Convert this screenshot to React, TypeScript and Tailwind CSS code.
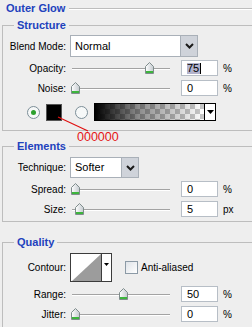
import React from "react";

function Thumb() {
  return (
    <svg width="9" height="12" viewBox="0 0 9 12">
      <defs>
        <linearGradient id="thumbg" x1="0" y1="0" x2="1" y2="0">
          <stop offset="0" stopColor="#ffffff" />
          <stop offset="1" stopColor="#c4cacf" />
        </linearGradient>
      </defs>
      <path d="M0.5 4.5 L4.5 0.5 L8.5 4.5 L8.5 11.5 L0.5 11.5 Z" fill="url(#thumbg)" stroke="#7f8c8c" />
      <path d="M1 9.5 H8 M1 10.5 H8" stroke="#3db53d" />
    </svg>
  );
}

function Slider({ pos }: { pos: number }) {
  return (
    <div className="relative w-[100px] h-[19px]">
      <div className="absolute left-[2px] right-0 top-[9px] h-px bg-[#a3a3a3]" />
      <div className="absolute left-[2px] right-0 top-[10px] h-px bg-white" />
      <div className="absolute top-[3px] flex" style={{ left: pos }}>
        <Thumb />
      </div>
    </div>
  );
}

function NumBox({ children }: { children: React.ReactNode }) {
  return (
    <div className="w-[37px] h-[16px] border border-[#b7bec6] bg-white pl-[5px] flex items-center text-[11px] leading-none text-black">
      {children}
    </div>
  );
}

function Chevron() {
  return (
    <svg width="9" height="6" viewBox="0 0 9 6">
      <path d="M1 1 L4.5 4.5 L8 1" fill="none" stroke="#1a1a1a" strokeWidth="2" />
    </svg>
  );
}

function SelectBox({ text, wide }: { text: string; wide: boolean }) {
  return (
    <div
      className={
        (wide ? "w-[128px] h-[22px] " : "w-[69px] h-[21px] ") +
        "flex border border-[#a9b0b8] bg-white"
      }
    >
      <div className="flex-1 flex items-center pl-[4px] text-[11px]">{text}</div>
      <div className="w-[17px] flex items-center justify-center bg-[#cfd3da] border-l border-[#a9b0b8]">
        <Chevron />
      </div>
    </div>
  );
}

function Label({ children }: { children: React.ReactNode }) {
  return <span className="w-[63px] text-right shrink-0">{children}</span>;
}

function SliderRow({
  label,
  pos,
  value,
  unit,
  selected,
}: {
  label: string;
  pos: number;
  value: string;
  unit: string;
  selected?: boolean;
}) {
  return (
    <div className="flex items-center h-[20px]">
      <Label>{label}</Label>
      <div className="ml-[4px]">
        <Slider pos={pos} />
      </div>
      <div className="ml-[11px]">
        <NumBox>
          {selected ? (
            <span className="bg-[#b3b3cc] pr-[1px] border-r border-black">{value}</span>
          ) : (
            value
          )}
        </NumBox>
      </div>
      <span className="ml-[5px]">{unit}</span>
    </div>
  );
}

function Radio({ on }: { on: boolean }) {
  return (
    <div className="w-[13px] h-[13px] rounded-full border border-[#7c8e98] bg-[#f6f8f8] flex items-center justify-center">
      {on && <div className="w-[5px] h-[5px] rounded-full bg-[#2da02d]" />}
    </div>
  );
}

function Legend({ children }: { children: React.ReactNode }) {
  return (
    <legend className="ml-[11px] px-[3px] font-bold text-[11px] leading-[14px] text-[#2141bd]">
      {children}
    </legend>
  );
}

export default function App() {
  return (
    <div className="relative w-[252px] h-[327px] overflow-hidden bg-[#eeeeee] font-['Liberation_Sans',Arial,sans-serif] text-[10px] text-black">
      <div className="flex items-center h-[17px] pl-[6px]">
        <span className="font-bold text-[11px] text-[#2141bd]">Outer Glow</span>
        <div className="flex-1 ml-[4px] h-[2px] border-t border-[#bdbdbd] border-b border-b-white" />
      </div>

      <fieldset className="mt-[1px] ml-[2px] w-[262px] border border-[#bdbdbd] pb-[9px]">
        <Legend>Structure</Legend>
        <div className="flex items-center mt-[3px] h-[22px]">
          <Label>Blend Mode:</Label>
          <div className="ml-[4px]">
            <SelectBox text="Normal" wide={true} />
          </div>
        </div>
        <div className="mt-[1px]">
          <SliderRow label="Opacity:" pos={75} value="75" unit="%" selected />
          <SliderRow label="Noise:" pos={1} value="0" unit="%" />
        </div>
        <div className="flex items-center mt-[5px] h-[18px]">
          <div className="ml-[24px]">
            <Radio on={true} />
          </div>
          <div className="ml-[6px] w-[16px] h-[17px] bg-black border border-[#555]" />
          <div className="ml-[13px]">
            <Radio on={false} />
          </div>
          <div className="ml-[6px] w-[122px] h-[18px] border border-black flex">
            <div className="flex-1 bg-[repeating-conic-gradient(#c8c8c8_0%_25%,#ffffff_0%_50%)] bg-[length:10px_10px]">
              <div className="w-full h-full bg-[linear-gradient(to_right,#000000,rgba(0,0,0,0.45)_40%,rgba(0,0,0,0))]" />
            </div>
            <div className="w-[11px] border-l border-black bg-white flex items-center justify-center">
              <svg width="7" height="4" viewBox="0 0 7 4">
                <path d="M0 0 H7 L3.5 4 Z" fill="#000" />
              </svg>
            </div>
          </div>
        </div>
      </fieldset>

      <fieldset className="mt-[8px] ml-[2px] w-[262px] border border-[#bdbdbd] pb-[2px]">
        <Legend>Elements</Legend>
        <div className="flex items-center mt-[4px] h-[21px]">
          <Label>Technique:</Label>
          <div className="ml-[4px]">
            <SelectBox text="Softer" wide={false} />
          </div>
        </div>
        <div className="mt-[1px]">
          <SliderRow label="Spread:" pos={1} value="0" unit="%" />
          <SliderRow label="Size:" pos={5} value="5" unit="px" />
        </div>
      </fieldset>

      <fieldset className="mt-[13px] ml-[2px] w-[262px] border border-[#bdbdbd] pb-[10px]">
        <Legend>Quality</Legend>
        <div className="flex items-center mt-[4px] h-[29px]">
          <Label>Contour:</Label>
          <div className="ml-[4px] w-[42px] h-[29px] border border-[#3c3c3c] bg-white flex">
            <svg width="30" height="27" viewBox="0 0 30 27" className="block">
              <path d="M1 27 L30 0 L30 27 Z" fill="#9c9c9c" />
            </svg>
            <div className="flex-1 border-l border-[#3c3c3c] flex justify-center pt-[9px]">
              <svg width="5" height="3" viewBox="0 0 5 3">
                <path d="M0 0 H5 L2.5 3 Z" fill="#000" />
              </svg>
            </div>
          </div>
          <div className="ml-[13px] w-[13px] h-[13px] border border-[#8c9aa6] bg-[linear-gradient(135deg,#dfe3e8,#ffffff)]" />
          <span className="ml-[3px]">Anti-aliased</span>
        </div>
        <div className="mt-[2px]">
          <SliderRow label="Range:" pos={49} value="50" unit="%" />
          <SliderRow label="Jitter:" pos={1} value="0" unit="%" />
        </div>
      </fieldset>

      <svg className="absolute left-0 top-0 pointer-events-none" width="252" height="327">
        <line x1="58" y1="117" x2="88" y2="131" stroke="#e01010" strokeWidth="1.2" />
      </svg>
      <span className="absolute left-[77px] top-[130px] text-[12.5px] leading-[14px] text-[#e51515]">
        000000
      </span>
    </div>
  );
}
